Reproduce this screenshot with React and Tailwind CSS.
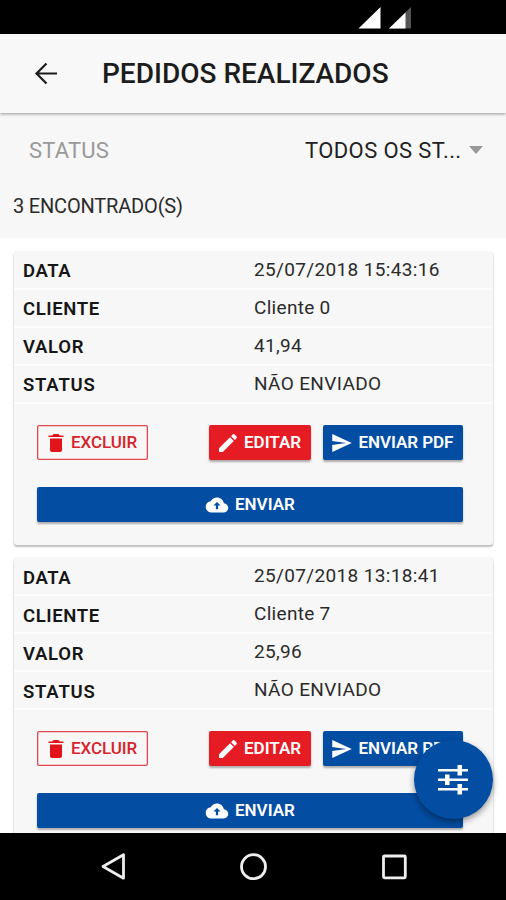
const orders = [
  { data: "25/07/2018 15:43:16", cliente: "Cliente 0", valor: "41,94", status: "NÃO ENVIADO" },
  { data: "25/07/2018 13:18:41", cliente: "Cliente 7", valor: "25,96", status: "NÃO ENVIADO" },
];

function Icon({ d, className }) {
  return (
    <svg viewBox="0 0 512 512" fill="currentColor" className={className}>
      <path d={d} />
    </svg>
  );
}

const trash =
  "M128 405.429C128 428.846 147.198 448 170.667 448h170.667C364.802 448 384 428.846 384 405.429V160H128v245.429zM416 96h-80l-26.785-32H202.786L176 96H96v32h320V96z";
const pencil =
  "M64 368v80h80l235.727-235.729-79.999-79.998L64 368zm377.602-217.602c8.531-8.531 8.531-21.334 0-29.865l-50.135-50.135c-8.531-8.531-21.334-8.531-29.865 0l-39.468 39.469 79.999 79.998 39.469-39.467z";
const send = "M48 448l416-192L48 64v149.333L346 256 48 298.667z";
const cloud =
  "M403.002 217.001C388.998 148.002 328.998 96 256 96c-57.998 0-107.998 32.998-132.998 81.001C63.002 183.002 16 233.998 16 296c0 65.996 53.999 120 120 120h260c55 0 100-45 100-100 0-52.998-40.996-96.001-92.998-98.999zM280 268v76h-48v-76h-52l76-78 76 78h-52z";

function Row({ label, value, spacing, labelSpacing }) {
  return (
    <div className="flex h-[38px] shrink-0 border-b-2 border-[#fcfcfc] pl-[9px] leading-[36px] text-[#161616]">
      <div className={`w-[231px] pt-[1.2px] text-[18.5px] font-semibold ${labelSpacing}`}>{label}</div>
      <div className={`text-[19px] text-[#2b2b2b] ${spacing}`}>{value}</div>
    </div>
  );
}

function Card({ order }) {
  return (
    <article className="ml-[14px] h-[293px] w-[479px] shrink-0 rounded-[3px] bg-[#f7f7f7] shadow-[0_2px_2px_rgba(0,0,0,0.25),0_0_2px_rgba(0,0,0,0.12)]">
      <Row label="DATA" value={order.data} spacing="tracking-[0.35px]" labelSpacing="tracking-[0.6px]" />
      <Row label="CLIENTE" value={order.cliente} spacing="tracking-[0.3px]" labelSpacing="tracking-[0.6px]" />
      <Row label="VALOR" value={order.valor} spacing="tracking-[0.3px]" labelSpacing="tracking-[0.7px]" />
      <Row label="STATUS" value={order.status} spacing="tracking-[0.35px]" labelSpacing="tracking-[0.8px]" />
      <div className="flex pl-[23px] pt-[21px] text-[17px] font-semibold leading-none">
        <button className="flex h-[35px] w-[111px] items-center rounded-[2px] pl-[7px] font-medium text-[#d7232b] shadow-[inset_0_0_0_1.3px_#e2474e]">
          <Icon d={trash} className="mr-[3px] size-[24px] text-[#e3131b]" />
          <span className="tracking-[-0.1px]">EXCLUIR</span>
        </button>
        <button className="ml-[61px] flex h-[35px] w-[102px] items-center rounded-[2px] bg-[#e51c23] pl-[7px] text-white shadow-[0_2px_2px_rgba(0,0,0,0.3)]">
          <Icon d={pencil} className="mr-[4px] size-[24px]" />
          <span>EDITAR</span>
        </button>
        <button className="ml-[12px] flex h-[35px] w-[140px] items-center rounded-[2px] bg-[#034da2] pl-[6.5px] text-white shadow-[0_2px_2px_rgba(0,0,0,0.3)]">
          <Icon d={send} className="mr-[5px] size-[24px]" />
          <span className="tracking-[-0.05px]">ENVIAR PDF</span>
        </button>
      </div>
      <button className="ml-[23px] mt-[27px] flex h-[35px] w-[426px] items-center rounded-[2px] bg-[#034da2] pl-[168px] text-[17px] font-semibold leading-none text-white shadow-[0_2px_2px_rgba(0,0,0,0.3)]">
        <Icon d={cloud} className="mr-[6px] size-[24px]" />
        <span>ENVIAR</span>
      </button>
    </article>
  );
}

export default function App() {
  return (
    <div className="relative flex h-[900px] w-[506px] flex-col overflow-hidden bg-white font-[Roboto,sans-serif]">
      <div className="h-[34px] shrink-0 bg-black">
        <svg className="h-[34px] w-full" viewBox="0 0 506 34">
          <path d="M358.500 28.500L380.500 7V28.500Z" fill="#fff" />
          <path d="M389 28.500L411 7V28.500Z" fill="#555" />
          <path d="M389 28.500L405.500 12.400V28.500Z" fill="#fff" />
        </svg>
      </div>
      <header className="z-10 flex h-[79px] shrink-0 items-center bg-[#f8f8f8] pl-[34px] shadow-[0_1px_3px_rgba(0,0,0,0.4)]">
        <svg className="size-[24px] text-[#1c1c1c]" viewBox="0 0 24 24" fill="none" stroke="currentColor" strokeWidth="2.200">
          <path d="M12.500 1.500L2.500 11.500L12.500 21.500M2.500 11.500H23" />
        </svg>
        <h1 className="ml-[44px] pt-px text-[28px] font-medium leading-none text-[#1c1c1c]">PEDIDOS REALIZADOS</h1>
      </header>
      <section className="h-[125px] shrink-0 bg-[#f7f7f7]">
        <div className="flex h-[74px] items-center pl-[29px] text-[22px] text-[#999]">
          <span className="w-[276px] tracking-[0.2px]">STATUS</span>
          <span className="w-[164px] tracking-[0.4px] text-[#222]">TODOS OS ST...</span>
          <svg className="h-[8px] w-[14px]" viewBox="0 0 14 8" fill="#999">
            <path d="M0 0H14L7 8Z" />
          </svg>
        </div>
        <p className="pl-[13px] pt-[5px] text-[20px] leading-[28px] tracking-[-0.18px] text-[#2b2b2b]">3 ENCONTRADO(S)</p>
      </section>
      <main className="flex min-h-0 flex-1 flex-col gap-[13.4px] overflow-hidden pt-[14px]">
        {orders.map((o) => (
          <Card key={o.data} order={o} />
        ))}
      </main>
      <nav className="h-[67px] shrink-0 bg-black">
        <svg className="h-[67px] w-full" viewBox="0 0 506 67" fill="none" stroke="#eee" strokeWidth="2.800">
          <path d="M123.500 21.800V45.200L103 33.500Z" strokeLinejoin="round" />
          <circle cx="253.500" cy="33.700" r="12" />
          <rect x="383.500" y="23" width="21.800" height="21.800" rx="1" />
        </svg>
      </nav>
      <button className="absolute left-[414px] top-[740px] flex size-[79px] items-center justify-center rounded-full bg-[#034da2] pr-[1px] text-white shadow-[0_3px_6px_rgba(0,0,0,0.4)]">
        <svg className="size-[30px]" viewBox="0 0 30 30" fill="currentColor">
          <path d="M0 4h30v2.500H0zM0 13.500h30v2.500H0zM0 23h30v2.500H0z" />
          <path d="M19.500 0h4.500v10.500h-4.500zM7 9.500h4.500v10.500h-4.500zM19.500 19h4.500v10.500h-4.500z" />
        </svg>
      </button>
    </div>
  );
}
